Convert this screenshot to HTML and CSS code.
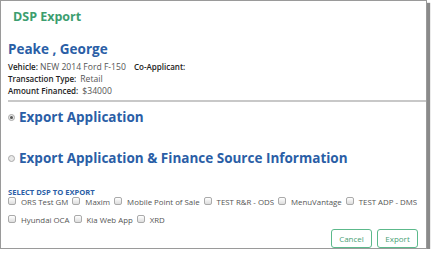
FILE: index.html
```html
<!DOCTYPE html>
<html>
<head>
<meta charset="utf-8">
<link rel="stylesheet" href="styles.css">
</head>
<body>
<div class="dialog">
  <h1 class="title">DSP Export</h1>
  <div class="info">
    <h2 class="name">Peake , George</h2>
    <div class="row first">
      <span class="field"><b>Vehicle:</b> <span class="val">NEW 2014 Ford F-150</span></span>
      <span class="field co"><b>Co-Applicant:</b></span>
    </div>
    <div class="row"><span class="field"><b>Transaction Type:</b> <span class="val gap">Retail</span></span></div>
    <div class="row"><span class="field"><b>Amount Financed:</b> <span class="val gap">$34000</span></span></div>
  </div>
  <hr class="sep">
  <div class="option first-opt"><span class="radio checked"></span><span>Export Application</span></div>
  <div class="option second"><span class="radio"></span><span>Export Application &amp; Finance Source Information</span></div>
  <div class="select-label">SELECT DSP TO EXPORT</div>
  <div class="checks">
    <label class="chk"><span class="box"></span>ORS Test GM</label>
    <label class="chk"><span class="box"></span>Maxim</label>
    <label class="chk"><span class="box"></span>Mobile Point of Sale</label>
    <label class="chk"><span class="box"></span>TEST R&amp;R - ODS</label>
    <label class="chk"><span class="box"></span>MenuVantage</label>
    <label class="chk"><span class="box"></span>TEST ADP - DMS</label>
    <label class="chk"><span class="box"></span>Hyundai OCA</label>
    <label class="chk"><span class="box"></span>Kia Web App</label>
    <label class="chk"><span class="box"></span>XRD</label>
  </div>
  <div class="actions">
    <button class="btn">Cancel</button>
    <button class="btn">Export</button>
  </div>
</div>
</body>
</html>
```
FILE: styles.css
```css
html, body { margin: 0; padding: 0; background: #fff; }
body { font-family: "Open Sans", "Liberation Sans", sans-serif; }
.dialog {
  width: 425px;
  height: 247px;
  border: 1px solid #9a9a9a;
  box-shadow: 3px 3px 1px #8a8a8a;
  box-sizing: content-box;
  display: flex;
  flex-direction: column;
}
.title {
  margin: 0;
  padding: 6px 0 0 12px;
  font-size: 12.5px;
  font-weight: 700;
  color: #3c9e6f;
  line-height: 19px;
}
.info { padding: 0 0 0 7px; }
.name {
  margin: 13px 0 0 0;
  font-size: 13.5px;
  font-weight: 700;
  color: #2a5ea6;
  line-height: 20px;
}
.row {
  font-size: 8px;
  line-height: 12px;
  color: #555;
  display: flex;
}
.row.first { margin-top: 2px; }
.row b { color: #222; font-weight: 600; }
.val { font-size: 8.6px; color: #555; }
.val.gap { margin-left: 2px; }
.field { flex: none; width: 126px; white-space: nowrap; overflow: visible; }
.co { width: auto; }
.sep {
  margin: 3px 0 0 7px;
  border: none;
  border-top: 2px solid #c8c8c8;
  height: 0;
}
.option {
  display: flex;
  align-items: center;
  gap: 4px;
  padding-left: 7px;
  font-size: 13.5px;
  font-weight: 700;
  color: #2a5ea6;
  line-height: 20px;
}
.option.first-opt { margin-top: 5px; }
.option.second { margin-top: 21px; }
.radio {
  width: 7px;
  height: 7px;
  border-radius: 50%;
  border: 1px solid #aaa;
  background: #e8e8e8;
  box-sizing: border-box;
  position: relative;
  flex: none;
}
.radio.checked::after {
  content: "";
  position: absolute;
  left: 1px; top: 1px;
  width: 3px; height: 3px;
  border-radius: 50%;
  background: #555;
}
.select-label {
  margin: 19px 0 0 7px;
  font-size: 7.6px;
  font-weight: 700;
  color: #2a5ea6;
  line-height: 10px;
}
.checks {
  display: flex;
  flex-wrap: wrap;
  padding-left: 7px;
  width: 418px;
  font-size: 7.85px;
  color: #555;
  line-height: 18px;
  margin-top: -4px;
}
.chk {
  display: flex;
  align-items: center;
  margin-right: 4px;
}
.box {
  width: 8px;
  height: 8px;
  border: 1px solid #aaa;
  border-radius: 2px;
  background: linear-gradient(#fff, #ddd);
  box-sizing: border-box;
  margin-right: 5px;
  margin-top: -3px;
}
.actions {
  display: flex;
  justify-content: flex-end;
  gap: 5px;
  padding-right: 8px;
  margin-top: auto;
  margin-bottom: 2px;
}
.btn {
  font-family: "Open Sans", "Liberation Sans", sans-serif;
  font-size: 8px;
  color: #4a9f76;
  background: #fff;
  border: 1px solid #5cb98b;
  border-radius: 3px;
  width: 41px;
  height: 19px;
  padding: 0;
}
```
